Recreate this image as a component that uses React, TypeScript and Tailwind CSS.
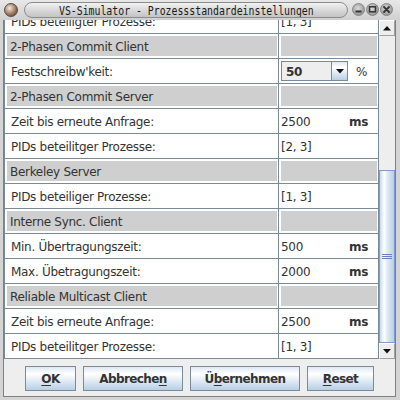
type Row =
  | { kind: "head"; label: string }
  | { kind: "data"; label: string; value: string; unit?: string }
  | { kind: "combo"; label: string; value: string };

const rows: Row[] = [
  { kind: "data", label: "PIDs beteiligter Prozesse:", value: "[1, 3]" },
  { kind: "head", label: "2-Phasen Commit Client" },
  { kind: "combo", label: "Festschreibw'keit:", value: "50" },
  { kind: "head", label: "2-Phasen Commit Server" },
  { kind: "data", label: "Zeit bis erneute Anfrage:", value: "2500", unit: "ms" },
  { kind: "data", label: "PIDs beteilitger Prozesse:", value: "[2, 3]" },
  { kind: "head", label: "Berkeley Server" },
  { kind: "data", label: "PIDs beteiliger Prozesse:", value: "[1, 3]" },
  { kind: "head", label: "Interne Sync. Client" },
  { kind: "data", label: "Min. Übertragungszeit:", value: "500", unit: "ms" },
  { kind: "data", label: "Max. Übetragungszeit:", value: "2000", unit: "ms" },
  { kind: "head", label: "Reliable Multicast Client" },
  { kind: "data", label: "Zeit bis erneute Anfrage:", value: "2500", unit: "ms" },
  { kind: "data", label: "PIDs beteilitger Prozesse:", value: "[1, 3]" },
];

function TableRow({ row }: { row: Row }) {
  if (row.kind === "head") {
    return (
      <div className="flex h-[25px] border-b border-[#7a8a99]">
        <div className="w-[274px] border-r border-[#7a8a99] p-[2px] pr-[1px]">
          <div className="h-full bg-[#cfcfcf] pl-[3px] pt-[1px] flex items-center">{row.label}</div>
        </div>
        <div className="flex-1 p-[2px] pr-[1px]">
          <div className="h-full bg-[#cfcfcf]" />
        </div>
      </div>
    );
  }
  return (
    <div className="flex h-[25px] border-b border-[#7a8a99] bg-white">
      <div className="w-[274px] border-r border-[#7a8a99] pl-[6px] pt-[1px] flex items-center">{row.label}</div>
      {row.kind === "combo" ? (
        <div className="flex-1 flex items-center pl-[2px]">
          <div className="flex w-[67px] h-[20px] border border-[#7a8a99]">
            <div className="flex-1 bg-[#eeeeee] font-bold pl-[4px] flex items-center pt-[1px]">{row.value}</div>
            <div className="w-[16px] border-l border-[#7a8a99] bg-[linear-gradient(#dde8f3,#ffffff_30%,#b8cfe5)] flex items-center justify-center">
              <svg width="8" height="5" viewBox="0 0 8 5">
                <path d="M0 0h8L4 4.5z" fill="#111" />
              </svg>
            </div>
          </div>
          <span className="ml-[8px] pt-[1px]">%</span>
        </div>
      ) : (
        <div className="flex-1 flex items-center pl-[2px] pt-[1px]">
          <span className="w-[68px]">{row.value}</span>
          {row.unit && <span className="font-bold">{row.unit}</span>}
        </div>
      )}
    </div>
  );
}

function TitleButton({ type }: { type: "min" | "max" | "close" }) {
  return (
    <svg width="13" height="13" viewBox="0 0 13 13">
      <defs>
        <radialGradient id={"g" + type} cx="45%" cy="40%" r="60%">
          <stop offset="0%" stopColor="#dcdcdc" />
          <stop offset="100%" stopColor="#929292" />
        </radialGradient>
      </defs>
      <circle cx="6.5" cy="6.5" r="6" fill={"url(#g" + type + ")"} stroke="#7a7a7a" strokeWidth="0.8" />
      {type === "min" && <rect x="3.5" y="7.5" width="6" height="2" fill="#333" />}
      {type === "max" && <rect x="3.5" y="3.8" width="6" height="5" fill="none" stroke="#333" strokeWidth="1.5" />}
      {type === "close" && (
        <path d="M4 4l5 5M9 4l-5 5" stroke="#333" strokeWidth="1.8" strokeLinecap="round" />
      )}
    </svg>
  );
}

function DialogButton({ w, children }: { w: string; children: React.ReactNode }) {
  return (
    <div
      className={
        "h-[25px] border border-[#7a8a99] bg-[linear-gradient(#dde8f3,#ffffff_30%,#b8cfe5)] flex items-center justify-center font-bold tracking-[-0.6px] " +
        w
      }
    >
      {children}
    </div>
  );
}

export default function App() {
  return (
    <div className="w-[400px] h-[400px] bg-[#d4d4d4] flex flex-col font-['DejaVu_Sans',sans-serif] text-[12px] text-[#333333] tracking-[-0.3px] leading-none">
      {/* title bar */}
      <div className="h-[20px] flex items-center px-[4px] pb-[1px] bg-[linear-gradient(#e8e8e8,#d0d0d0)]">
        <div className="w-[14px] h-[14px] rounded-full bg-[radial-gradient(circle_at_38%_35%,#f4e8dc,#9c7a5e_55%,#3e2c20)] border border-[#5a4a40]" />
        <div className="ml-[6px] w-[324px] h-[16px] rounded-full border border-[#8c8c8c] bg-[linear-gradient(#f2f2f2,#d4d4d4_60%,#c4c4c4)] flex items-center justify-center overflow-hidden">
          <span className="inline-block scale-x-[0.82] font-['DejaVu_Sans_Mono',monospace] text-[12px] tracking-[0px] text-[#1a1a1a] pt-[2px] whitespace-nowrap">
            VS-Simulator - Prozessstandardeinstellungen
          </span>
        </div>
        <div className="ml-[4px] flex gap-[1px]">
          <TitleButton type="min" />
          <TitleButton type="max" />
          <TitleButton type="close" />
        </div>
      </div>

      {/* body */}
      <div className="flex-1 ml-[3px] mr-[4px] mb-[3px] border-x border-b border-[#808080] bg-[#eeeeee] flex flex-col">
        <div className="h-[339px] flex overflow-hidden">
          <div className="w-[375px] border-x border-[#7a8a99] bg-white overflow-hidden">
            <div className="mt-[-11px]">
              {rows.map((r, i) => (
                <TableRow key={i} row={r} />
              ))}
            </div>
          </div>
          {/* scrollbar */}
          <div className="w-[16px] flex flex-col bg-[#eeeeee]">
            <div className="h-[16px] border border-[#ffffff] border-r-[#a0a0a0] border-b-[#a0a0a0] flex items-center justify-center">
              <svg width="8" height="5" viewBox="0 0 8 5">
                <path d="M0 4.5h8L4 0z" fill="#111" />
              </svg>
            </div>
            <div className="flex-1 flex flex-col">
              <div className="h-[134px]" />
              <div className="flex-1 border border-[#7d9bcf] bg-[linear-gradient(to_right,#c8dbee,#ffffff_30%,#dce8f4_55%,#b8cfe5)] flex flex-col items-center justify-center gap-[1px]">
                <div className="w-[10px] h-px bg-[#6382bf]" />
                <div className="w-[10px] h-px bg-[#6382bf]" />
                <div className="w-[10px] h-px bg-[#6382bf]" />
              </div>
            </div>
            <div className="h-[16px] border border-[#ffffff] border-r-[#a0a0a0] border-b-[#a0a0a0] flex items-center justify-center">
              <svg width="8" height="5" viewBox="0 0 8 5">
                <path d="M0 0h8L4 4.5z" fill="#111" />
              </svg>
            </div>
          </div>
        </div>

        {/* buttons */}
        <div className="flex justify-center gap-[7px] pt-[7px]">
          <DialogButton w="w-[51px]">
            <u className="underline-offset-2">O</u>K
          </DialogButton>
          <DialogButton w="w-[100px]">
            Abbreche<u className="underline-offset-2">n</u>
          </DialogButton>
          <DialogButton w="w-[110px]">
            Ü<u className="underline-offset-2">b</u>ernehmen
          </DialogButton>
          <DialogButton w="w-[67px]">
            <u className="underline-offset-2">R</u>eset
          </DialogButton>
        </div>
      </div>
    </div>
  );
}
